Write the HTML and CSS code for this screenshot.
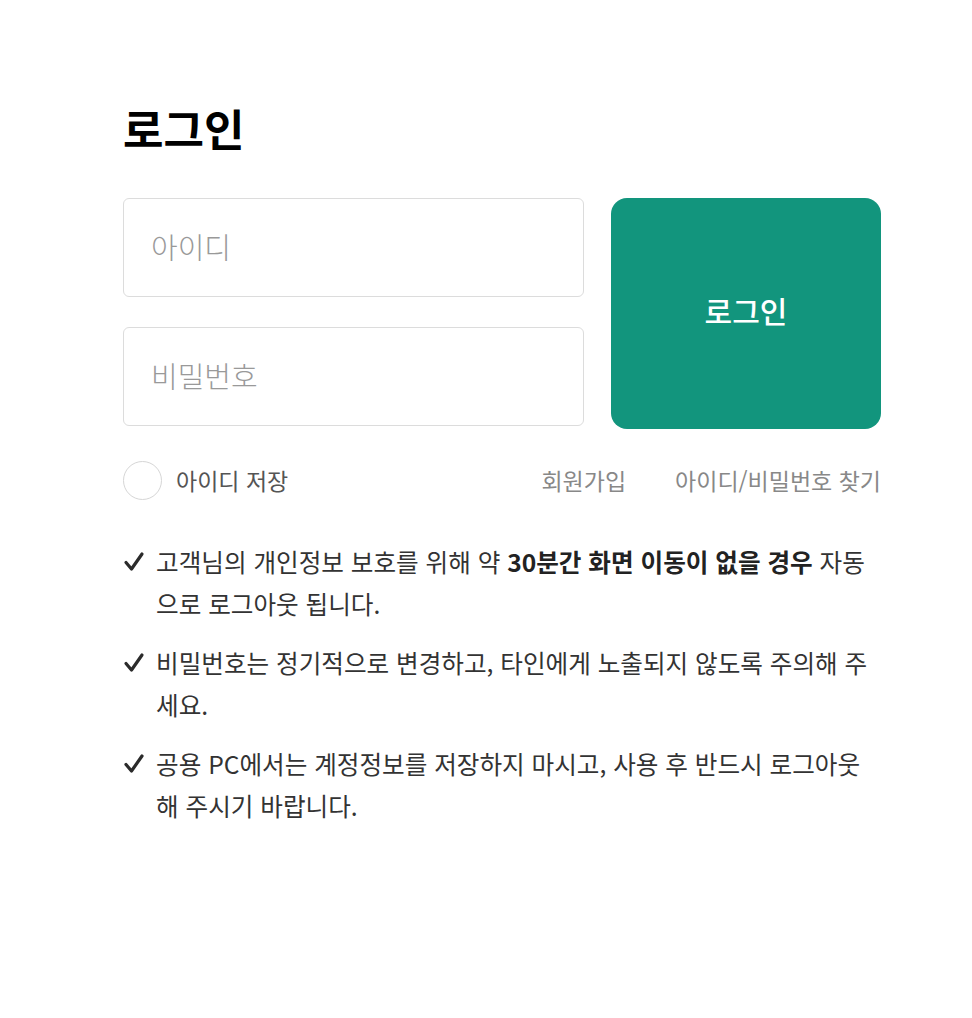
FILE: index.html
```html
<!DOCTYPE html>
<html lang="ko">
<head>
<meta charset="utf-8">
<title>로그인</title>
<link rel="stylesheet" href="styles.css">
</head>
<body>
<main class="login">
  <h1 class="title">로그인</h1>
  <form class="form-row">
    <div class="fields">
      <input class="field" type="text" placeholder="아이디">
      <input class="field" type="password" placeholder="비밀번호">
    </div>
    <button class="submit" type="button">로그인</button>
  </form>
  <div class="options">
    <label class="remember"><span class="circle"></span><span>아이디 저장</span></label>
    <nav class="links">
      <a href="#">회원가입</a>
      <a href="#">아이디/비밀번호 찾기</a>
    </nav>
  </div>
  <ul class="notes">
    <li><svg class="check" viewBox="0 0 22 22" width="22" height="22"><path d="M3 11.5 L8.5 18 L19 3" fill="none" stroke="#2b2b2b" stroke-width="3.2" stroke-linecap="round" stroke-linejoin="round"/></svg><p>고객님의 개인정보 보호를 위해 약 <strong>30분간 화면 이동이 없을 경우</strong> 자동으로 로그아웃 됩니다.</p></li>
    <li><svg class="check" viewBox="0 0 22 22" width="22" height="22"><path d="M3 11.5 L8.5 18 L19 3" fill="none" stroke="#2b2b2b" stroke-width="3.2" stroke-linecap="round" stroke-linejoin="round"/></svg><p>비밀번호는 정기적으로 변경하고, 타인에게 노출되지 않도록 주의해 주세요.</p></li>
    <li><svg class="check" viewBox="0 0 22 22" width="22" height="22"><path d="M3 11.5 L8.5 18 L19 3" fill="none" stroke="#2b2b2b" stroke-width="3.2" stroke-linecap="round" stroke-linejoin="round"/></svg><p>공용 PC에서는 계정정보를 저장하지 마시고, 사용 후 반드시 로그아웃 해 주시기 바랍니다.</p></li>
  </ul>
</main>
</body>
</html>
```

FILE: styles.css
```css
* { box-sizing: border-box; }
html, body { margin: 0; padding: 0; background: #fff; }
body {
  font-family: "Noto Sans CJK KR", "Noto Sans", sans-serif;
  color: #333;
}
.login {
  width: 758px;
  margin: 0 0 0 123px;
  padding-top: 98px;
}
.title {
  margin: 0;
  font-size: 44px;
  line-height: 60px;
  font-weight: 700;
  color: #000;
}
.form-row {
  display: flex;
  align-items: flex-start;
  gap: 27px;
  margin: 40px 0 0;
}
.fields {
  display: flex;
  flex-direction: column;
  gap: 30px;
  width: 461px;
}
.field {
  height: 99px;
  width: 100%;
  border: 1px solid #dcdcdc;
  border-radius: 6px;
  padding: 0 27px 3px;
  font-family: inherit;
  font-size: 29px;
  font-weight: 300;
  color: #333;
  outline: none;
}
.field::placeholder { color: #999; }
.submit {
  width: 270px;
  height: 231px;
  border: 0;
  border-radius: 16px;
  background: #12957d;
  color: #fff;
  font-family: inherit;
  font-size: 30px;
  font-weight: 500;
  padding: 0 0 8px;
  cursor: pointer;
}
.options {
  display: flex;
  align-items: center;
  justify-content: space-between;
  margin-top: 31px;
  height: 40px;
}
.remember {
  display: flex;
  align-items: center;
  gap: 14px;
  font-size: 23px;
  color: #555;
}
.circle {
  width: 39px;
  height: 39px;
  border: 1px solid #d6d6d6;
  border-radius: 50%;
}
.links {
  display: flex;
  gap: 49px;
}
.links a {
  font-size: 23px;
  color: #888;
  text-decoration: none;
}
.notes {
  list-style: none;
  margin: 40px 0 0;
  padding: 0;
}
.notes li {
  display: flex;
  gap: 11px;
  margin-bottom: 17px;
}
.check {
  flex: none;
  margin-top: 11px;
}
.notes p {
  margin: 0;
  font-size: 24.6px;
  line-height: 42px;
  color: #333;
  width: 725px;
}
.notes strong { font-weight: 700; color: #222; }
```
